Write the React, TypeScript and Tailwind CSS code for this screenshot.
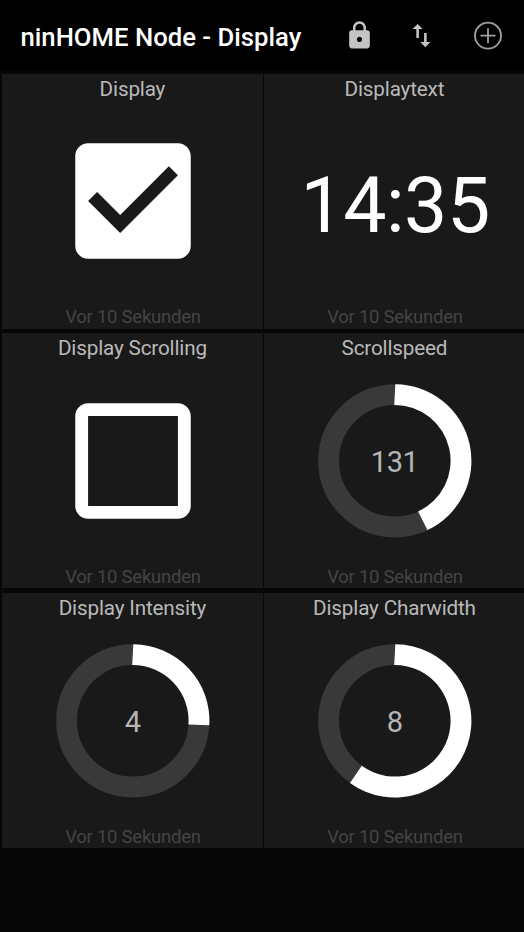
import type { ReactNode } from "react";

function LockIcon() {
  return (
    <svg className="h-[31px] w-[31px] shrink-0" viewBox="0 0 24 24" fill="#c4c4c4">
      <path d="M18 8h-1V6c0-2.76-2.24-5-5-5S7 3.24 7 6v2H6c-1.1 0-2 .9-2 2v10c0 1.1.9 2 2 2h12c1.1 0 2-.9 2-2V10c0-1.1-.9-2-2-2zm-6 9c-1.1 0-2-.9-2-2s.9-2 2-2 2 .9 2 2-.9 2-2 2zm3.100-9H8.900V6c0-1.710 1.390-3.100 3.100-3.100 1.710 0 3.100 1.390 3.100 3.100v2z" />
    </svg>
  );
}

function SwapIcon() {
  return (
    <svg className="h-[31px] w-[31px] shrink-0" viewBox="0 0 24 24" fill="#c4c4c4">
      <path d="M16 17.010V10h-2v7.010h-3L15 21l4-3.990h-3zM9 3L5 6.990h3V14h2V6.990h3L9 3z" />
    </svg>
  );
}

function AddIcon() {
  return (
    <svg className="h-[32px] w-[32px] shrink-0" viewBox="0 0 32 32" fill="none" stroke="#a0a0a0" strokeWidth="1.8">
      <circle cx="16" cy="15.700" r="13" />
      <path d="M8.500 15.700h15M16 8.200v15" />
    </svg>
  );
}

function Checkbox({ checked }: { checked: boolean }) {
  return (
    <svg className="h-[154px] w-[154px]" viewBox="0 0 24 24" fill="#fff">
      {checked ? (
        <path d="M19 3H5c-1.110 0-2 .9-2 2v14c0 1.100.89 2 2 2h14c1.110 0 2-.9 2-2V5c0-1.100-.89-2-2-2zm-9 14l-5-5 1.410-1.410L10 14.170l7.590-7.590L19 8l-9 9z" />
      ) : (
        <path d="M19 5v14H5V5h14m0-2H5c-1.100 0-2 .9-2 2v14c0 1.100.9 2 2 2h14c1.100 0 2-.9 2-2V5c0-1.100-.9-2-2-2z" />
      )}
    </svg>
  );
}

const OUTER = 76.6;
const INNER = 55.8;

function point(radius: number, degrees: number) {
  const a = (degrees * Math.PI) / 180;
  return `${(76.8 + radius * Math.sin(a)).toFixed(2)} ${(76.8 - radius * Math.cos(a)).toFixed(2)}`;
}

function Gauge({ value, angle }: { value: number; angle: number }) {
  const large = angle > 180 ? 1 : 0;
  const arc = `M${point(OUTER, 0.4)}A${OUTER} ${OUTER} 0 ${large} 1 ${point(OUTER, angle)}L${point(INNER, angle + 0.5)}A${INNER} ${INNER} 0 ${large} 0 ${point(INNER, -0.6)}Z`;
  return (
    <div className="grid place-items-center">
      <svg className="col-start-1 row-start-1 h-[154px] w-[154px]" viewBox="0 0 154 154">
        <circle cx="76.8" cy="76.8" r="66.2" fill="none" stroke="#393939" strokeWidth="20.8" />
        <path d={arc} fill="#fff" />
      </svg>
      <span className="col-start-1 row-start-1 pt-[3px] pr-[1px] text-[29px] leading-none tracking-[-0.5px] text-[#b5b5b5]">
        {value}
      </span>
    </div>
  );
}

function Tile({ title, children }: { title: string; children: ReactNode }) {
  return (
    <section className="flex flex-col items-center justify-between bg-[#191919]">
      <h2 className="h-[50px] pt-[3px] text-[20.7px] leading-6 tracking-[-0.17px] text-[#b9b9b9]">{title}</h2>
      <div className="flex h-[154px] items-center justify-center pl-[1.200px]">{children}</div>
      <p className="flex h-[50px] items-end pl-[1px] text-[18.5px] leading-[21.500px] tracking-[-0.25px] text-[#444444]">
        Vor 10 Sekunden
      </p>
    </section>
  );
}

export default function App() {
  return (
    <div className="flex h-[932px] w-[524px] flex-col overflow-hidden bg-[#070707] font-['Roboto','Noto_Sans',sans-serif]">
      <header className="flex h-[71px] shrink-0 items-center bg-black pl-[20.500px]">
        <h1 className="w-[323.500px] shrink-0 pt-[3px] text-[25.700px] leading-8 font-medium whitespace-nowrap text-white">
          ninHOME Node - Display
        </h1>
        <LockIcon />
        <div className="ml-[31px] flex">
          <SwapIcon />
        </div>
        <button className="ml-[35px] flex">
          <AddIcon />
        </button>
      </header>
      <main className="mt-[2.600px] ml-[2.200px] grid grid-cols-[260.500px_260.500px] grid-rows-[255px_255px_255px] gap-x-[1.500px] gap-y-[4.800px]">
        <Tile title="Display">
          <Checkbox checked />
        </Tile>
        <Tile title="Displaytext">
          <span className="pt-[10px] text-[77px] leading-none tracking-[-0.5px] text-white">14:35</span>
        </Tile>
        <Tile title="Display Scrolling">
          <Checkbox checked={false} />
        </Tile>
        <Tile title="Scrollspeed">
          <Gauge value={131} angle={154.8} />
        </Tile>
        <Tile title="Display Intensity">
          <Gauge value={4} angle={93.4} />
        </Tile>
        <Tile title="Display Charwidth">
          <Gauge value={8} angle={215.8} />
        </Tile>
      </main>
    </div>
  );
}
